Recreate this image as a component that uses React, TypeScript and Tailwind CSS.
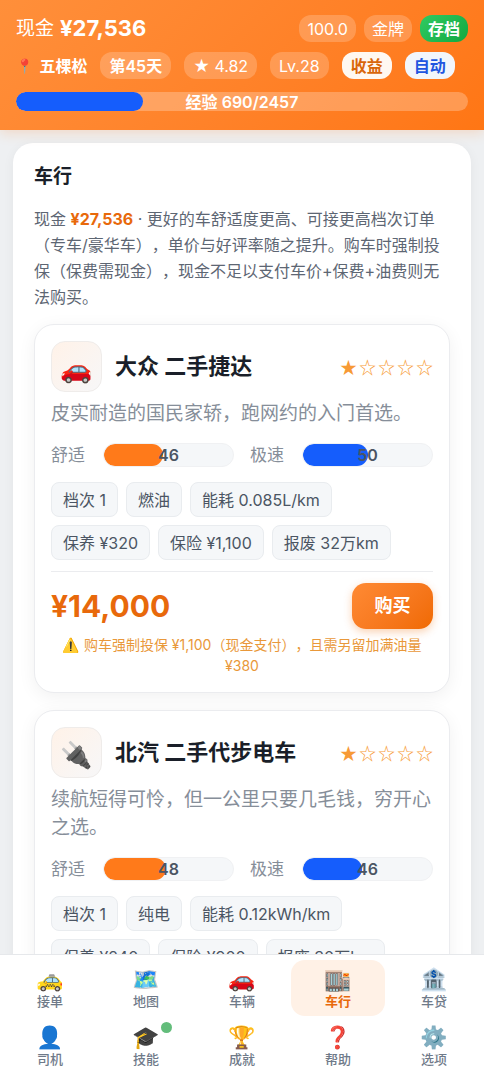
import React from 'react';
import { clsx } from 'clsx';

interface Car {
  icon: string;
  name: string;
  stars: number;
  desc: string;
  comfort: number;
  speed: number;
  tags: string[];
  price: string;
  warning: string;
}

const cars: Car[] = [
  {
    icon: '🚗',
    name: '大众 二手捷达',
    stars: 1,
    desc: '皮实耐造的国民家轿，跑网约的入门首选。',
    comfort: 46,
    speed: 50,
    tags: ['档次 1', '燃油', '能耗 0.085L/km', '保养 ¥320', '保险 ¥1,100', '报废 32万km'],
    price: '¥14,000',
    warning: '购车强制投保 ¥1,100（现金支付），且需另留加满油量 ¥380'
  },
  {
    icon: '🔌',
    name: '北汽 二手代步电车',
    stars: 1,
    desc: '续航短得可怜，但一公里只要几毛钱，穷开心之选。',
    comfort: 48,
    speed: 46,
    tags: ['档次 1', '纯电', '能耗 0.12kWh/km', '保养 ¥240', '保险 ¥900', '报废 30万km'],
    price: '¥16,000',
    warning: '购车强制投保 ¥900（现金支付），且需另留充满电量 ¥40'
  }
];

const tabs = [
  { icon: '🚕', label: '接单' },
  { icon: '🗺️', label: '地图' },
  { icon: '🚗', label: '车辆' },
  { icon: '🏬', label: '车行', active: true },
  { icon: '🏦', label: '车贷' },
  { icon: '👤', label: '司机' },
  { icon: '🎓', label: '技能', dot: true },
  { icon: '🏆', label: '成就' },
  { icon: '❓', label: '帮助' },
  { icon: '⚙️', label: '选项' }
];

const pill = 'flex h-[27px] items-center rounded-xl text-base';

const StatBar: React.FC<{ label: string; value: number; color: string }> = ({ label, value, color }) => (
  <div className="flex flex-1 items-center justify-between">
    <span className="text-[17px] leading-6 text-[#868e99]">{label}</span>
    <div className="relative h-6 w-[131px] overflow-hidden rounded-full border border-[#f0f1f3] bg-[#f5f7f9]">
      <div className={clsx('h-full rounded-full', color)} style={{ width: `${value}%` }} />
      <span className="absolute inset-0 flex items-center justify-center text-base font-semibold text-[#4b5563]">
        {value}
      </span>
    </div>
  </div>
);

const CarCard: React.FC<{ car: Car }> = ({ car }) => (
  <article className="rounded-[20px] border border-[#ebecef] bg-white p-4 shadow-[0_4px_18px_rgba(0,0,0,0.06)]">
    <div className="flex items-center gap-[13px]">
      <div className="flex size-[51px] items-center justify-center rounded-[14px] border border-[#efecea] bg-linear-135 from-[#fff2e8] to-[#f7f7f8] pt-1 text-[26px]">
        {car.icon}
      </div>
      <h2 className="flex-1 text-[22px] font-bold text-[#1a1f29]">{car.name}</h2>
      <div className="flex gap-0.5 font-['Noto_Sans_CJK_SC',sans-serif] text-[17px] leading-6 text-[#f79a35]">
        {[0, 1, 2, 3, 4].map((i) => (
          <span key={i}>{i < car.stars ? '★' : '☆'}</span>
        ))}
      </div>
    </div>
    <p className="mt-2 text-[19px] leading-7 text-[#868e99]">{car.desc}</p>
    <div className="mt-[15px] flex gap-4">
      <StatBar label="舒适" value={car.comfort} color="bg-[#ff7a1a]" />
      <StatBar label="极速" value={car.speed} color="bg-[#155dfc]" />
    </div>
    <div className="mt-[15px] flex flex-wrap gap-2">
      {car.tags.map((tag) => (
        <span
          key={tag}
          className="flex h-[35px] items-center rounded-lg border border-[#e9ecef] bg-[#f5f7f9] px-[11px] text-base text-[#4b5563]"
        >
          {tag}
        </span>
      ))}
    </div>
    <div className="mt-[11px] flex items-center justify-between border-t border-[#ebecef] pt-[11px]">
      <span className="text-3xl font-bold text-[#e8690b]">{car.price}</span>
      <button
        type="button"
        className="h-[46px] w-[81px] rounded-[14px] bg-linear-135 from-[#ff8a33] to-[#f06a00] text-lg font-bold text-white shadow-[0_3px_8px_rgba(240,106,0,0.3)]"
      >
        购买
      </button>
    </div>
    <p className="mt-[5px] text-center text-sm leading-[21px] text-[#e9983a]">⚠️ {car.warning}</p>
  </article>
);

const App: React.FC = () => {
  return (
    <div className="flex h-screen flex-col bg-[#eef0f2] font-['Inter','Noto_Sans_CJK_SC','Noto_Color_Emoji',sans-serif] [text-spacing-trim:space-all]">
      <header className="z-10 bg-linear-135 from-[#ff8f3a] to-[#ff7614] px-4 pt-[15px] pb-[19px] text-white shadow-[0_3px_12px_rgba(255,122,26,0.2)]">
        <div className="flex items-center gap-2">
          <div className="flex flex-1 items-center gap-1.5 leading-[27px]">
            <span className="text-[19px] leading-[27px]">现金</span>
            <strong className="text-[22px] leading-[27px]">¥27,536</strong>
          </div>
          <span className={clsx(pill, 'bg-white/20 px-2')}>100.0</span>
          <span className={clsx(pill, 'bg-white/20 px-2')}>金牌</span>
          <button type="button" className={clsx(pill, 'bg-linear-135 from-[#2fcb62] to-[#10a840] px-2 font-bold')}>
            存档
          </button>
        </div>
        <div className="mt-2.5 flex items-center gap-[13px]">
          <span className="flex items-center gap-1.5 leading-6 font-semibold">
            <span className="text-sm leading-6">📍</span>
            五棵松
          </span>
          <span className={clsx(pill, 'bg-white/20 px-[9px] font-semibold')}>第45天</span>
          <span className={clsx(pill, 'bg-white/20 px-[9px]')}>★ 4.82</span>
          <span className={clsx(pill, 'bg-white/20 px-[9px]')}>Lv.28</span>
          <button type="button" className={clsx(pill, 'bg-[#fff8f1] px-[9px] font-bold text-[#d9660a]')}>
            收益
          </button>
          <button type="button" className={clsx(pill, 'bg-[#f2f6fb] px-[9px] font-bold text-[#2156e0]')}>
            自动
          </button>
        </div>
        <div className="relative mt-[13px] h-[19px] overflow-hidden rounded-full bg-white/25">
          <div className="h-full rounded-full bg-[#155dfc]" style={{ width: `${(690 / 2457) * 100}%` }} />
          <span className="absolute inset-0 flex items-center justify-center text-base font-semibold">
            经验 690/2457
          </span>
        </div>
      </header>

      <main className="min-h-0 flex-1 overflow-y-auto px-[13px] py-[13px] [scrollbar-width:none]">
        <section className="rounded-[20px] bg-white p-[21px] shadow-[0_2px_12px_rgba(0,0,0,0.05)]">
          <h1 className="text-[19px] leading-[26px] font-bold text-[#1a1f29]">车行</h1>
          <p className="mt-4 text-base leading-[26px] text-[#5d6673]">
            现金 <strong className="text-[#e8690b]">¥27,536</strong>{' '}
            · 更好的车舒适度更高、可接更高档次订单（专车/豪华车），单价与好评率随之提升。购车时强制投保（保费需现金），现金不足以支付车价+保费+油费则无法购买。
          </p>
          <div className="mt-3.5 flex flex-col gap-[17px]">
            {cars.map((car) => (
              <CarCard key={car.name} car={car} />
            ))}
          </div>
        </section>
      </main>

      <nav className="z-10 grid grid-cols-5 gap-0.5 border-t border-[#e6e8eb] bg-white px-[3px] pt-[5px] pb-[6px]">
        {tabs.map((tab) => (
          <button
            key={tab.label}
            type="button"
            className={clsx(
              'flex h-14 flex-col items-center rounded-[14px] pt-1.5 text-[13px]',
              tab.active ? 'bg-[#fff1e6] font-bold text-[#e8690b]' : 'font-medium text-[#6f7a89]'
            )}
          >
            <span className="relative text-[22px] leading-[26px]">
              {tab.icon}
              {tab.dot && <span className="absolute -top-0.5 -right-3 size-[11px] rounded-full bg-[#63bd7b]" />}
            </span>
            <span className="leading-[18px]">{tab.label}</span>
          </button>
        ))}
      </nav>
    </div>
  );
};

export default App;
